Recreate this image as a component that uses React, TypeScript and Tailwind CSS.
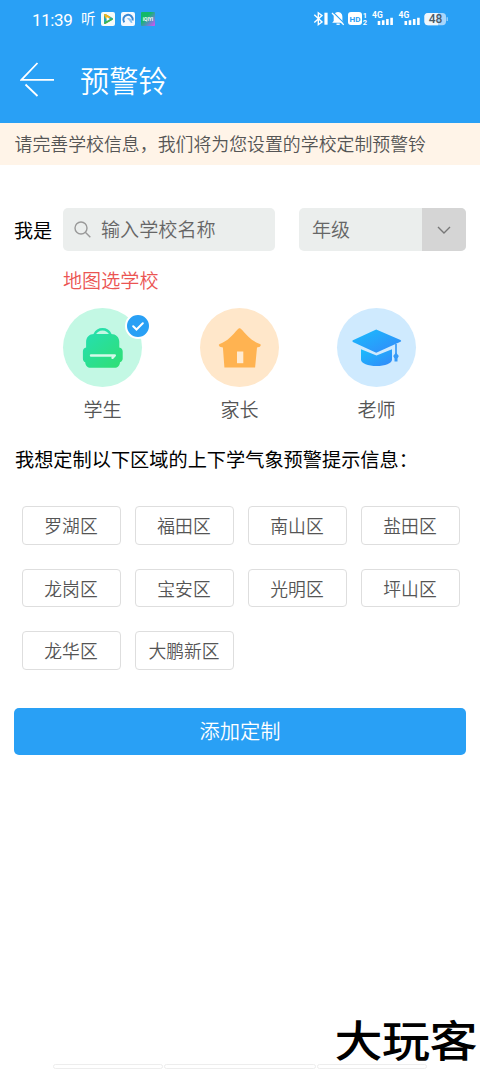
import React from "react";

const districts = ["罗湖区", "福田区", "南山区", "盐田区", "龙岗区", "宝安区", "光明区", "坪山区", "龙华区", "大鹏新区"];

function StatusBar() {
  return (
    <div className="flex h-[38px] items-center pl-8 text-white">
      <span className="w-[49px] pt-0.5 font-['Roboto','Noto_Sans_CJK_SC',sans-serif] text-[17px] leading-5 font-normal tracking-[-0.4px]">11:39</span>
      <span className="-mt-0.5 w-5 text-[14.5px] leading-5 font-normal">听</span>
      <svg className="mr-1.5" width="14" height="14" viewBox="0 0 14 14">
        <rect width="14" height="14" rx="2" fill="#f6fbf8" />
        <path d="M3 3q0-1.6 1.5-.9L11.5 6q1 .9 0 1.8L4.5 11.8Q3 12.4 3 11z" fill="#24a9b5" />
        <path d="M3 3q0-1.6 1.5-.9L10 5.2 5 7z" fill="#f6b51c" />
        <path d="M3 10.8q0 1.6 1.5 1L11.5 7.8q.9-.9.2-1.5L7 8z" fill="#43b649" />
        <path d="M5.6 5v4L9 7z" fill="#fff" />
      </svg>
      <svg className="mr-1.5" width="14" height="14" viewBox="0 0 14 14">
        <rect width="14" height="14" rx="2" fill="#f4f9fe" />
        <path d="M3.3 10.4A4.7 4.7 0 1 1 11.6 8.6" fill="none" stroke="#3988d4" strokeWidth="2" />
        <path d="M6 6.4c2.5-1 5 .4 5.4 4.6C9 11 8.8 8.4 6 6.4z" fill="#8bc4f4" />
      </svg>
      <svg width="14" height="14" viewBox="0 0 14 14">
        <defs>
          <linearGradient id="app" x1="0" y1="0" x2="1" y2="1">
            <stop offset="0.35" stopColor="#12b968" />
            <stop offset="0.65" stopColor="#548fc0" />
            <stop offset="1" stopColor="#e24df4" />
          </linearGradient>
        </defs>
        <rect width="14" height="14" rx="1" fill="url(#app)" />
        <text x="7" y="8.5" textAnchor="middle" fontSize="4.8" fontWeight="700" fontFamily="Roboto, sans-serif" fill="#fff">iQIYI</text>
      </svg>
      <svg className="ml-[158px]" width="136" height="20" viewBox="313 9.5 136 20" fill="none" stroke="#fff">
        <path d="M314.3 15.3 322 22.5l-3.7 2.7V13.3l3.7 2.8-7.7 7" strokeWidth="1.4" />
        <path d="M326 13.2v12" strokeWidth="3.2" />
        <path d="M338 12.6c-3.2.3-4.3 2.4-4.3 5v3.8l-1.5 1.9h11.8l-1.6-2v-3.7c0-2.6-1.1-4.7-4.4-5z" fill="#fff" stroke="none" />
        <path d="M336.5 24.7h3.2" strokeWidth="1.4" />
        <path d="m333.3 13 11.2 11.2" stroke="#29a0f5" strokeWidth="1.2" />
        <path d="m332 13.5 11.7 11.8" strokeWidth="1.3" />
        <rect x="348" y="12.6" width="14" height="13" rx="3" fill="#fff" stroke="none" />
        <g fontFamily="Roboto, sans-serif" fontWeight="700" stroke="none" fill="#fff">
          <text x="349.6" y="22.1" fontSize="8" textLength="11" lengthAdjust="spacingAndGlyphs" fill="#29a0f5">HD</text>
          <text x="362.8" y="18" fontSize="7.5">1</text>
          <text x="362.8" y="25.6" fontSize="7.5">2</text>
          <text x="372" y="18.8" fontSize="8.5">4G</text>
          <text x="398.5" y="18.8" fontSize="8.5">4G</text>
        </g>
        <path d="M379 21.5v4M383.2 20.8v4.7M387.4 19.6v5.9M391.6 18.2v7.3M405.8 21.5v4M410 20.8v4.7M414.2 19.6v5.9M418.4 18.2v7.3" strokeWidth="2.6" />
        <rect x="424.5" y="13.5" width="21.5" height="12.2" rx="3.6" fill="#a8d6fb" stroke="none" />
        <path d="M428 13.5h10v12.2h-10a3.6 3.6 0 0 1-3.6-3.6v-5a3.6 3.6 0 0 1 3.6-3.6Z" fill="#eff7fd" stroke="none" />
        <path d="M447.2 17.8v3.6" stroke="#a8d6fb" strokeWidth="1.2" />
        <text x="435.5" y="23.8" textAnchor="middle" fontSize="12" fontWeight="500" fontFamily="Roboto, sans-serif" stroke="none" fill="#4a5a66">48</text>
      </svg>
    </div>
  );
}

function Backpack() {
  return (
    <svg className="size-full" viewBox="0 0 79 79">
      <defs>
        <linearGradient id="bag" x1="0" y1="0" x2="1" y2="1">
          <stop stopColor="#25dfb1" />
          <stop offset="1" stopColor="#30df72" />
        </linearGradient>
      </defs>
      <path d="M31.5 26.5c1.7-3.4 4.5-5.2 8-5.2s6.4 1.8 8 5.2" fill="none" stroke="#27dfa8" strokeWidth="2.4" />
      <path d="M30.8 26h17.4c4.6 0 8.1 3.2 8.1 7.8v5.8c2 .4 3.4 1.9 3.4 4v6.9c0 1.9-1 3.2-2.7 3.7-.3 3.4-2.1 5.6-5.6 5.6H27.8c-3.5 0-5.3-2.2-5.6-5.6-1.6-.5-2.3-1.8-2.3-3.7v-6.9c0-2.1 1.2-3.6 3.2-4v-5.8c0-4.6 3.3-7.8 7.7-7.8Z" fill="url(#bag)" />
      <path d="M35.2 26c1-1.2 2.4-1.8 4.2-1.8s3.3.6 4.4 1.8z" fill="#c3f8e4" />
      <path d="M28 47.5h23.8l-2.3 2.3" fill="none" stroke="#d5fae9" strokeWidth="2.4" strokeLinecap="round" strokeLinejoin="round" />
    </svg>
  );
}

function House() {
  return (
    <svg className="size-full" viewBox="0 0 79 79">
      <path d="M39.5 20.2c.9 0 1.6.7 2.2 1.4 4.8 5.5 10.4 12 18.2 14.3.9.3 1.2 1 .7 1.7l-.7 1.1-2.9.9-1.9 20H24.4l-1.5-20-3.1-.9-.8-1.2c-.4-.7-.1-1.3.7-1.6 7.8-2.3 13-8.8 17.8-14.3.6-.7 1.2-1.4 2-1.4Z" fill="#ffb351" />
      <rect x="37" y="43.5" width="6.3" height="11.7" fill="#ffebd2" />
    </svg>
  );
}

function GraduationCap() {
  return (
    <svg className="size-full" viewBox="0 0 79 79">
      <defs>
        <linearGradient id="cap" x1="0" y1="0" x2="1" y2="1">
          <stop stopColor="#19bdfd" />
          <stop offset="1" stopColor="#3488f9" />
        </linearGradient>
      </defs>
      <path d="M39.2 21.6 63.5 32q1.5 1 0 1.8L39.2 44.7 15.9 34q-1.2-1 0-1.7Z" fill="url(#cap)" />
      <path d="M24 41.2v10.5c0 3.6 7.2 6.3 15.6 6.3S55 55.3 55 51.7V41.2l-15.5 6.3Z" fill="url(#cap)" />
      <path d="M59 36v17" stroke="#389bf7" strokeWidth="1.7" />
      <path d="M59 44.6 61.8 48l-1.3 2.4v3h-3v-3L56.2 48Z" fill="#389bf7" />
    </svg>
  );
}

const roles = [
  { name: "学生", bg: "bg-[#c3f8e4]", icon: <Backpack />, selected: true },
  { name: "家长", bg: "bg-[#ffe7ca]", icon: <House />, selected: false },
  { name: "老师", bg: "bg-[#cfeafe]", icon: <GraduationCap />, selected: false },
];

export default function App() {
  return (
    <div className="flex h-[1070px] w-[480px] flex-col overflow-hidden bg-white font-['Noto_Sans_CJK_SC',sans-serif] font-[350] text-[#555]">
      <header className="h-[123px] shrink-0 bg-[#29a0f5]">
        <StatusBar />
        <div className="flex h-[83px] items-center pl-5 text-white">
          <svg className="mr-[26px]" width="34" height="36" viewBox="0 0 34 36" fill="none" stroke="currentColor" strokeWidth="1.8">
            <path d="M17.5 1 1.4 17.8H34M5.5 22.5l12 11.5" />
          </svg>
          <h1 className="pb-0.5 text-[29.2px] leading-9 font-[350]">预警铃</h1>
        </div>
      </header>
      <p className="h-[42px] shrink-0 bg-[#fff4e8] pl-[14.5px] text-[17.9px] leading-[41px] whitespace-nowrap">
        请完善学校信息，我们将为您设置的学校定制预警铃
      </p>

      <main className="px-3.5 pt-[43px]">
        <div className="flex h-[43px] items-center">
          <label className="w-[49px] text-[19.1px] leading-6 font-normal text-black">我是</label>
          <div className="flex h-full w-[212px] items-center rounded-[5px] bg-[#ebeeed] pl-[11px] text-[19.1px] text-[#666]">
            <svg className="mr-2.5" width="17" height="17" viewBox="0 0 17 17" fill="none" stroke="#999" strokeWidth="1.4">
              <circle cx="7" cy="7" r="6" />
              <path d="m11.3 11.3 5 5" />
            </svg>
            输入学校名称
          </div>
          <div className="ml-6 flex h-full w-[167px] overflow-hidden rounded-[5px] bg-[#ebeeed] text-[19.1px] text-[#666]">
            <span className="flex flex-1 items-center pl-[13px]">年级</span>
            <span className="flex w-11 items-center justify-center bg-[#d5d5d5]">
              <svg width="14" height="8" viewBox="0 0 14 8" fill="none" stroke="#777" strokeWidth="1.4">
                <path d="m1 1 6 6 6-6" />
              </svg>
            </span>
          </div>
        </div>

        <a className="mt-[17px] block pl-[49px] text-[19.1px] leading-6 text-[#eb5553]">地图选学校</a>

        <div className="mt-4 flex gap-[58px] pl-[49px]">
          {roles.map((role) => (
            <div key={role.name} className="flex w-[79px] flex-col items-center">
              <div className={`relative size-[79px] rounded-full ${role.bg}`}>
                {role.icon}
                {role.selected && (
                  <span className="absolute top-[5px] right-[-9px] flex size-[26px] items-center justify-center rounded-full border-2 border-white bg-[#29a0f5]">
                    <svg width="12" height="9" viewBox="0 0 12 9" fill="none" stroke="#fff" strokeWidth="2" strokeLinecap="round">
                      <path d="m1.2 4.2 3.3 3.3 6.3-6.2" />
                    </svg>
                  </span>
                )}
              </div>
              <span className="mt-2.5 text-[19.1px] leading-6">{role.name}</span>
            </div>
          ))}
        </div>

        <h2 className="mt-[26px] pl-px text-[19.2px] leading-6 font-normal whitespace-nowrap text-black">我想定制以下区域的上下学气象预警提示信息：</h2>

        <div className="mt-[35px] ml-[7.5px] grid w-[438px] grid-cols-4 gap-x-3.5 gap-y-6">
          {districts.map((name) => (
            <button key={name} className="h-[38.5px] rounded-[4px] border border-[#dedede] text-[17.8px] leading-6 whitespace-nowrap">
              {name}
            </button>
          ))}
        </div>

        <button className="mt-[38px] h-[47.5px] w-[452px] rounded-[5px] bg-[#29a0f5] pb-0.5 text-[20.3px] text-white">添加定制</button>
      </main>

      <footer className="mt-auto flex flex-col">
        <div className="mb-[3px] origin-bottom scale-y-90 self-end pr-[3px] text-[48px] leading-[54px] font-medium tracking-[-0.5px] text-black">大玩客</div>
        <div className="mb-px -mt-px ml-[53px] flex gap-px">
          <span className="h-[5px] w-[110px] rounded-full border border-[#ededed]" />
          <span className="h-[5px] w-[152px] rounded-full border border-[#ededed]" />
          <span className="h-[5px] w-[110px] rounded-full border border-[#ededed]" />
        </div>
      </footer>
    </div>
  );
}
